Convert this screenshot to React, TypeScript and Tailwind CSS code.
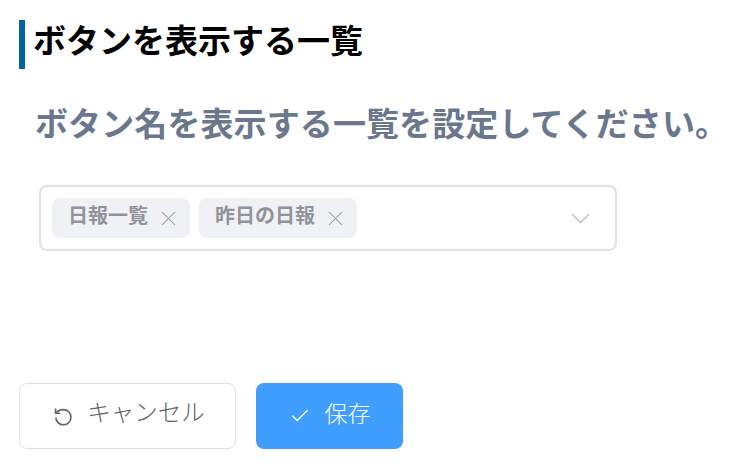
import { Check, ChevronDown, X } from "lucide-react"

const selected = ["日報一覧", "昨日の日報"]

export default function App() {
  return (
    <div className="w-[740px] h-[469px] bg-white overflow-hidden pt-5 pl-[19px] font-['Liberation_Sans','Noto_Sans_CJK_JP',sans-serif]">
      {/* Section title */}
      <h1 className="h-[49px] w-[400px] border-l-[6px] border-[#00669b] pl-2 text-[33px] leading-[44px] font-bold text-black">
        ボタンを表示する一覧
      </h1>

      <p className="mt-[33px] ml-4 text-[33px] leading-[46px] font-bold text-[#6b778c] whitespace-nowrap tracking-[0.1px]">
        ボタン名を表示する一覧を設定してください。
      </p>

      {/* Multi select */}
      <div className="mt-[37px] ml-5 w-[578px] h-[66px] border-2 border-[#e0e0e6] rounded-lg flex items-center pl-[11px] pr-[18px]">
        <div className="flex-1 flex gap-[9px]">
          {selected.map(name => (
            <span key={name} className="h-10 rounded-lg bg-[#f0f1f5] flex items-center pl-4 pr-[9px] text-[#909399]">
              <span className="text-[20px] leading-[24px] font-bold -mt-1">{name}</span>
              <X className="ml-[8px] mt-[1px] h-[25px] w-[25px] text-[#909399]" strokeWidth={1} />
            </span>
          ))}
        </div>
        <ChevronDown className="h-[33px] w-[33px] text-[#b4b6bc]" strokeWidth={1} />
      </div>

      {/* Actions */}
      <div className="mt-[132px] flex gap-5">
        <button className="w-[217px] h-[66px] border border-[#dcdfe6] rounded-lg bg-white flex items-center justify-center pl-1 text-[#606266] font-light">
          <svg viewBox="0 0 18 18" fill="none" stroke="currentColor" strokeWidth={1.6} className="h-[18px] w-[18px] mr-[15px] mt-[1px]">
            <path d="M2.6 4.4C4 2.6 6.2 1.6 9.4 1.6a7.6 7.6 0 1 1-7.6 8" />
            <path d="M1.6 .6v4.6h4.6" />
          </svg>
          <span className="text-[23.5px] -mt-1">キャンセル</span>
        </button>
        <button className="w-[147px] h-[66px] rounded-lg bg-[#409eff] flex items-center justify-center text-white font-light">
          <Check className="h-[22px] w-[22px] mr-[14px]" strokeWidth={1.5} />
          <span className="text-[23px] -mt-1">保存</span>
        </button>
      </div>
    </div>
  )
}
